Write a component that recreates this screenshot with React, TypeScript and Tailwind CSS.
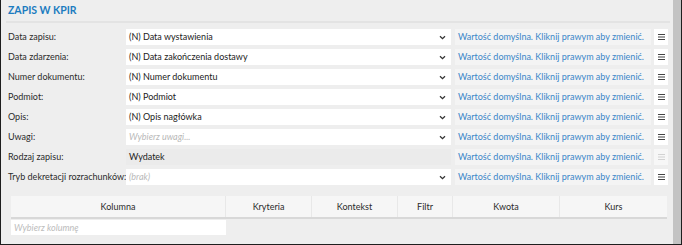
import React from "react";

type Row = {
  label: string;
  value: string;
  placeholder?: boolean;
  readOnly?: boolean;
};

const rows: Row[] = [
  { label: "Data zapisu:", value: "(N) Data wystawienia" },
  { label: "Data zdarzenia:", value: "(N) Data zakończenia dostawy" },
  { label: "Numer dokumentu:", value: "(N) Numer dokumentu" },
  { label: "Podmiot:", value: "(N) Podmiot" },
  { label: "Opis:", value: "(N) Opis nagłówka" },
  { label: "Uwagi:", value: "Wybierz uwagi...", placeholder: true },
  { label: "Rodzaj zapisu:", value: "Wydatek", readOnly: true },
  { label: "Tryb dekretacji rozrachunków:", value: "(brak)", placeholder: true },
];

const columns = [
  { name: "Kolumna", w: "w-[215px]" },
  { name: "Kryteria", w: "w-[86px]" },
  { name: "Kontekst", w: "w-[86px]" },
  { name: "Filtr", w: "w-[55px]" },
  { name: "Kwota", w: "w-[107px]" },
  { name: "Kurs", w: "flex-1" },
];

function Chevron() {
  return (
    <svg width="7" height="5" viewBox="0 0 7 5" className="text-[#333]">
      <path d="M1 1.2 L3.5 3.7 L6 1.2" stroke="currentColor" strokeWidth="1.3" fill="none" />
    </svg>
  );
}

function MenuIcon({ disabled }: { disabled?: boolean }) {
  return (
    <svg width="7" height="6" viewBox="0 0 7 6" className={disabled ? "text-[#d2d2d2]" : "text-[#444]"}>
      <rect x="0" y="0" width="7" height="1" fill="currentColor" />
      <rect x="0" y="2.5" width="7" height="1" fill="currentColor" />
      <rect x="0" y="5" width="7" height="1" fill="currentColor" />
    </svg>
  );
}

export default function App() {
  return (
    <div
      className="flex h-[245px] w-[682px] border-x border-b border-[#1e1e1e] bg-[#eeeeee] text-[9px] text-[#2b2b2b]"
      style={{ fontFamily: 'Lato, "Noto Sans", sans-serif' }}
    >
      <div className="flex flex-1 flex-col pl-[7px] pr-[3px]">
        {/* HEADER */}
        <div className="flex h-[21px] items-center pt-[1px]">
          <span className="text-[10.5px] font-bold text-[#1c7cc0]">ZAPIS W KPIR</span>
        </div>
        <div className="-ml-[2px] h-[2px] bg-[#e3e3e3]" />

        {/* FORM */}
        <div className="mt-[6px] flex flex-col gap-[4px]">
          {rows.map((row) => (
            <div key={row.label} className="flex h-[16px] items-center whitespace-nowrap">
              <div className="w-[118px] shrink-0">{row.label}</div>
              {row.readOnly ? (
                <div className="flex h-full w-[325px] items-center bg-[#ebebeb] pl-[3px] text-[#222]">{row.value}</div>
              ) : (
                <div className="flex h-full w-[325px] items-center justify-between bg-white pl-[3px] pr-[5px]">
                  <span className={row.placeholder ? "italic text-[#b8b8b8]" : "text-[#222]"}>{row.value}</span>
                  <Chevron />
                </div>
              )}
              <div className="ml-[4px] flex h-full w-[196px] items-center bg-[#f4f4f4] pl-[3px] text-[#3a86c8]">
                Wartość domyślna. Kliknij prawym aby zmienić.
              </div>
              <div
                className={`ml-[3px] flex h-full w-[14px] items-center justify-center ${
                  row.readOnly ? "bg-[#f7f7f7]" : "bg-white"
                }`}
              >
                <MenuIcon disabled={row.readOnly} />
              </div>
            </div>
          ))}
        </div>

        {/* TABLE */}
        <div className="ml-[3px] mt-[11px] w-[656px]">
          <div className="flex h-[23px] border-b-2 border-[#d8d8d8] bg-[#f6f6f6]">
            {columns.map((c, i) => (
              <div
                key={c.name}
                className={`flex items-center justify-center ${c.w} ${
                  i < columns.length - 1 ? "border-r border-[#e8e8e8]" : ""
                }`}
              >
                {c.name}
              </div>
            ))}
          </div>
          <div className="mt-[1px] flex h-[15px] w-[215px] items-center bg-white pl-[3px] italic text-[#bcbcbc]">
            Wybierz kolumnę
          </div>
        </div>
      </div>

      {/* SCROLLBAR */}
      <div className="w-[8px] bg-[#c3c3c3]" />
    </div>
  );
}
